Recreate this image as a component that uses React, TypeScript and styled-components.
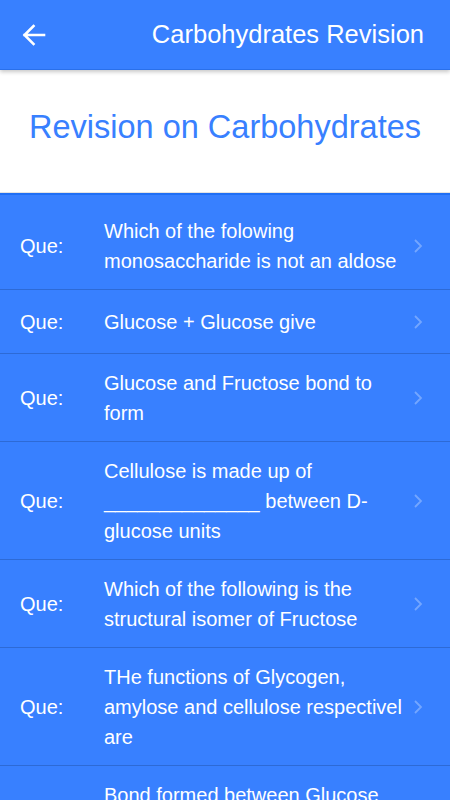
import styled, { createGlobalStyle } from "styled-components";

const Global = createGlobalStyle`
  html, body {
    margin: 0;
    padding: 0;
    background: #ffffff;
  }
  body {
    font-family: "Liberation Sans", Arial, sans-serif;
    -webkit-font-smoothing: antialiased;
  }
`;

const Page = styled.div`
  width: 450px;
  height: 800px;
  overflow: hidden;
  display: flex;
  flex-direction: column;
  background: #3880ff;
`;

const Header = styled.header`
  position: relative;
  z-index: 2;
  height: 69px;
  display: flex;
  align-items: center;
  justify-content: space-between;
  padding: 0 26px 0 22px;
  background: #3880ff;
  border-bottom: 1px solid #2a70ea;
  box-shadow: 0 2px 4px rgba(0, 0, 0, 0.22);
  flex-shrink: 0;
`;

const BackButton = styled.button`
  display: flex;
  align-items: center;
  justify-content: center;
  padding: 0;
  margin: 0;
  border: none;
  background: transparent;
  width: 24px;
  height: 24px;
  cursor: pointer;
`;

const HeaderTitle = styled.h1`
  margin: 0;
  color: #ffffff;
  font-size: 25.5px;
  font-weight: 400;
`;

const Banner = styled.section`
  background: #ffffff;
  height: 123px;
  padding-bottom: 8px;
  box-sizing: border-box;
  display: flex;
  align-items: center;
  justify-content: center;
  border-bottom: 1px solid #e3e3e3;
  flex-shrink: 0;
`;

const BannerTitle = styled.h2`
  margin: 0;
  color: #3880ff;
  font-size: 32.5px;
  font-weight: 400;
`;

const List = styled.div`
  border-top: 2px solid #1f6ff5;
  padding-top: 7px;
  background: #3880ff;
  display: flex;
  flex-direction: column;
`;

const Row = styled.div`
  display: grid;
  grid-template-columns: 84px 1fr 37px;
  align-items: center;
  min-height: 64px;
  padding: 13.5px 0 13.5px 20px;
  box-sizing: border-box;
  border-bottom: 1px solid #2d6ad6;
  color: #ffffff;
`;

const Label = styled.span`
  font-size: 20px;
  line-height: 30px;
`;

const Question = styled.span`
  font-size: 20px;
  line-height: 30px;
  padding-right: 8px;
`;

const Chevron = styled.svg`
  width: 10px;
  height: 16px;
  justify-self: start;
`;

const questions = [
  "Which of the folowing monosaccharide is not an aldose",
  "Glucose + Glucose give",
  "Glucose and Fructose bond to form",
  "Cellulose is made up of ______________ between D-glucose units",
  "Which of the following is the structural isomer of Fructose",
  "THe functions of Glycogen, amylose and cellulose respectivel are",
  "Bond formed between Glucose and Fructose is",
];

export default function App() {
  return (
    <Page>
      <Global />
      <Header>
        <BackButton aria-label="Back">
          <svg width="24" height="24" viewBox="0 0 24 24" fill="none">
            <path
              d="M22 12H2.5M11.5 3L2.5 12L11.5 21"
              stroke="#ffffff"
              strokeWidth="2.6"
              strokeLinecap="square"
            />
          </svg>
        </BackButton>
        <HeaderTitle>Carbohydrates Revision</HeaderTitle>
      </Header>
      <Banner>
        <BannerTitle>Revision on Carbohydrates</BannerTitle>
      </Banner>
      <List>
        {questions.map((q) => (
          <Row key={q}>
            <Label>Que:</Label>
            <Question>{q}</Question>
            <Chevron viewBox="0 0 10 16" fill="none">
              <path
                d="M2 2L8 8L2 14"
                stroke="rgba(255,255,255,0.3)"
                strokeWidth="1.8"
              />
            </Chevron>
          </Row>
        ))}
      </List>
    </Page>
  );
}
